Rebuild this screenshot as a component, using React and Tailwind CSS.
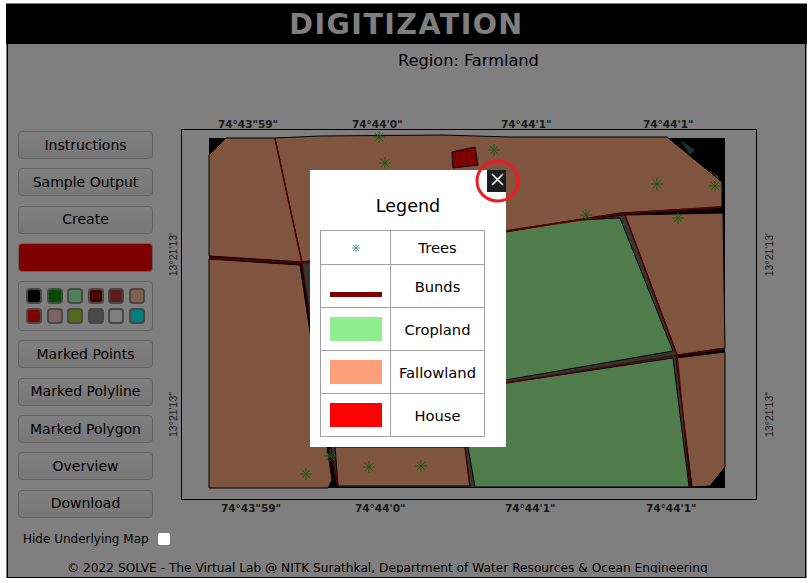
const sideButtons = ['Instructions', 'Sample Output', 'Create']
const markButtons = ['Marked Points', 'Marked Polyline', 'Marked Polygon', 'Overview', 'Download']
const swatches = ['#000000', '#009a00', '#a0ffaa', '#960000', '#bc3434', '#ffc094', '#ff0000', '#ffc4d0', '#a8d834', '#949494', '#ffffff', '#00ffff']
const trees = [[379,137],[385,163],[494,150],[657,184],[715,186],[586,215],[678,218],[306,474],[330,456],[369,467],[421,466]]
const legendRows = [
  { name: 'Cropland', color: 'bg-[#90ee90]' },
  { name: 'Fallowland', color: 'bg-[#ffa07a]' },
  { name: 'House', color: 'bg-[#ff0000]' },
]

function SideButton({ label }) {
  return (
    <button className="h-[28px] w-full rounded-[4px] border border-[#c8c8c8] bg-gradient-to-b from-[#ffffff] to-[#eeeeee] text-[14px] text-black">
      {label}
    </button>
  )
}

function Tree({ x, y, r = 6 }) {
  return (
    <g stroke="#3cb424" strokeWidth="1">
      <line x1={x - r} y1={y} x2={x + r} y2={y} />
      <line x1={x} y1={y - r} x2={x} y2={y + r} />
      <line x1={x - r * 0.7} y1={y - r * 0.7} x2={x + r * 0.7} y2={y + r * 0.7} />
      <line x1={x - r * 0.7} y1={y + r * 0.7} x2={x + r * 0.7} y2={y - r * 0.7} />
    </g>
  )
}

function FarmMap() {
  const brown = '#ffaa80'
  const green = '#a0f898'
  const bund = '#b00000'
  return (
    <svg viewBox="182 130 574 369" className="block h-full w-full">
      <rect x="209" y="138" width="516" height="350" fill="#000000" />
      <polygon points="680,140 695,150 690,155" fill="#406050" />
      <polygon points="705,168 718,176 722,188 712,180" fill="#606a66" />
      <polygon points="302,263 338,487 470,487 475,487 690,487 677,355 625,215 506,232" fill="#607068" />
      <polygon points="209,155 226,138 275,138 302,262 209,256" fill={brown} stroke="#000" />
      <polygon points="275,138 320,136 443,135 510,137 667,137 722,182 722,207 620,213 506,231 302,262" fill={brown} stroke="#000" />
      <polygon points="209,259 300,265 332,480 328,488 209,488" fill={brown} stroke="#000" />
      <polygon points="335,447 465,447 470,486 338,486" fill={brown} stroke="#000" />
      <polygon points="506,232 577,220 620,218 673,351 506,380 340,410 310,270" fill={green} stroke="#000" />
      <polygon points="506,383 673,358 689,487 475,487 468,447 340,440" fill={green} stroke="#000" />
      <polygon points="625,215 723,213 725,348 677,355" fill={brown} stroke="#000" />
      <polygon points="676,358 725,352 725,467 710,486 692,487" fill={brown} stroke="#000" />
      <polygon points="452,152 475,147 478,165 453,168" fill="#ff0000" stroke="#000" />
      <polyline points="275,139 302,263" fill="none" stroke={bund} strokeWidth="1.5" />
      <polyline points="209,258 302,263 506,231 620,214 722,207" fill="none" stroke={bund} strokeWidth="2" />
      <polyline points="302,263 312,330 330,447 338,487" fill="none" stroke={bund} strokeWidth="1.5" />
      <polyline points="465,447 470,487" fill="none" stroke={bund} strokeWidth="1.5" />
      <polyline points="625,215 677,355 690,487" fill="none" stroke={bund} strokeWidth="1.5" />
      <polyline points="506,383 672,356 725,349" fill="none" stroke={bund} strokeWidth="1.5" />
      {trees.map(([x, y]) => (
        <Tree key={`${x}-${y}`} x={x} y={y} />
      ))}
    </svg>
  )
}

function LegendModal() {
  return (
    <div className="absolute left-[304px] top-[167px] z-20 h-[277px] w-[196px] bg-white">
      <button className="absolute right-0 top-0 flex h-[22px] w-[19px] items-center justify-center bg-[#1a1d20] pb-[3px] pl-[2px]">
        <svg width="13" height="13" viewBox="0 0 13 13">
          <path d="M1 1 12 12M12 1 1 12" stroke="#fff" strokeWidth="1.6" />
        </svg>
      </button>
      <svg width="46" height="46" viewBox="0 0 46 46" className="absolute left-[165px] top-[-11px]">
        <ellipse cx="22.5" cy="22" rx="20.5" ry="20" fill="none" stroke="#ee1c25" strokeWidth="3" />
      </svg>
      <h2 className="pt-[25px] text-center text-[17.5px] leading-[22px] text-black">Legend</h2>
      <table className="mx-[10px] mt-[13px] w-[165px] table-fixed border-collapse text-center text-[14.7px] text-black">
        <tbody>
          <tr className="h-[34px]">
            <td className="w-[70px] border border-[#a0a0a0]">
              <svg width="10" height="10" viewBox="0 0 10 10" className="mx-auto block">
                <path d="M5 1v8M1 5h8M2 2l6 6M2 8l6-6" stroke="#5f9ea0" strokeWidth="1" />
              </svg>
            </td>
            <td className="border border-[#a0a0a0] pt-[2px]">Trees</td>
          </tr>
          <tr className="h-[43px]">
            <td className="border border-[#a0a0a0] align-bottom">
              <div className="mx-auto mb-[10px] h-[5px] w-[52px] bg-[#800000]"></div>
            </td>
            <td className="border border-[#a0a0a0] pt-[2px]">Bunds</td>
          </tr>
          {legendRows.map((row) => (
            <tr key={row.name} className="h-[43px]">
              <td className="border border-[#a0a0a0] pb-[1px]">
                <div className={`mx-auto h-[24px] w-[52px] ${row.color}`}></div>
              </td>
              <td className="border border-[#a0a0a0] pt-[3px]">{row.name}</td>
            </tr>
          ))}
        </tbody>
      </table>
    </div>
  )
}

function SideLabels({ align }) {
  return (
    <div className={`flex h-[371px] flex-col pt-[104px] font-['Liberation_Sans',sans-serif] ${align}`}>
      <span className="rotate-180 [writing-mode:vertical-rl]">13°21'13'</span>
      <span className="mt-[116px] rotate-180 [writing-mode:vertical-rl]">13°21'13"</span>
    </div>
  )
}

function App() {
  return (
    <div className="min-h-[583px] bg-white font-['DejaVu_Sans',sans-serif]">
      <div className="h-[3px]"></div>
      <div className="relative mx-[6px] w-[801px] overflow-hidden">
        <div className="h-px bg-white"></div>
        <div className="h-[40px] bg-black text-center text-[28.5px] font-bold leading-[42px] tracking-[1.45px] text-white">DIGITIZATION</div>

        <div className="mx-px h-[534px] overflow-hidden border-x border-b border-black bg-white">
          <p className="pl-[390px] pt-[7px] text-[16.2px] leading-[20px] text-black">Region: Farmland</p>

          <div className="mt-[60px] flex items-start pl-[10px]">
            <div className="flex w-[135px] flex-col gap-[9.3px]">
              {sideButtons.map((label) => (
                <SideButton key={label} label={label} />
              ))}
              <div className="h-[29px] rounded-[4px] border border-[#c8c8c8] bg-[#ff0000]"></div>
              <div className="grid h-[50px] grid-cols-6 content-center justify-items-center gap-x-[4px] gap-y-[4px] rounded-[4px] border border-[#c8c8c8] px-[7px]">
                {swatches.map((color) => (
                  <span
                    key={color}
                    className="h-[16px] w-[16px] rounded-[4px] border-2 border-[#909090]"
                    style={{ backgroundColor: color }}
                  ></span>
                ))}
              </div>
              {markButtons.map((label) => (
                <SideButton key={label} label={label} />
              ))}
            </div>

            <div className="ml-[14px] mt-[-13px] w-[609px] text-[10.5px] font-bold leading-[13px] text-[#333333]">
              <div className="flex h-[11px] pl-[51px]">
                <span className="w-[134px]">74°43"59"</span>
                <span className="w-[149px]">74°44'0"</span>
                <span className="w-[142px]">74°44'1"</span>
                <span>74°44'1"</span>
              </div>
              <div className="flex font-normal">
                <SideLabels align="w-[14px] items-start" />
                <div className="h-[371px] w-[576px] border border-black bg-white">
                  <FarmMap />
                </div>
                <SideLabels align="w-[19px] items-end" />
              </div>
              <div className="mt-[2px] flex pl-[54px]">
                <span className="w-[134px]">74°43"59"</span>
                <span className="w-[150px]">74°44'0"</span>
                <span className="w-[141px]">74°44'1"</span>
                <span>74°44'1"</span>
              </div>
            </div>
          </div>

          <div className="mt-[11px] flex h-[20px] items-center pl-[15px] text-[12px] text-black">
            <span>Hide Underlying Map</span>
            <input type="checkbox" className="relative z-20 ml-[9px] h-[12px] w-[12px] appearance-none rounded-[2px] bg-white" />
          </div>
          <p className="mt-[11px] h-[13.5px] overflow-hidden pl-[59px] text-[12.2px] leading-[16px] text-black">
            © 2022 SOLVE - The Virtual Lab @ NITK Surathkal, Department of Water Resources &amp; Ocean Engineering
          </p>
        </div>

        <div className="absolute inset-0 z-10 bg-black/50"></div>
        <LegendModal />
      </div>
    </div>
  )
}

export default App
